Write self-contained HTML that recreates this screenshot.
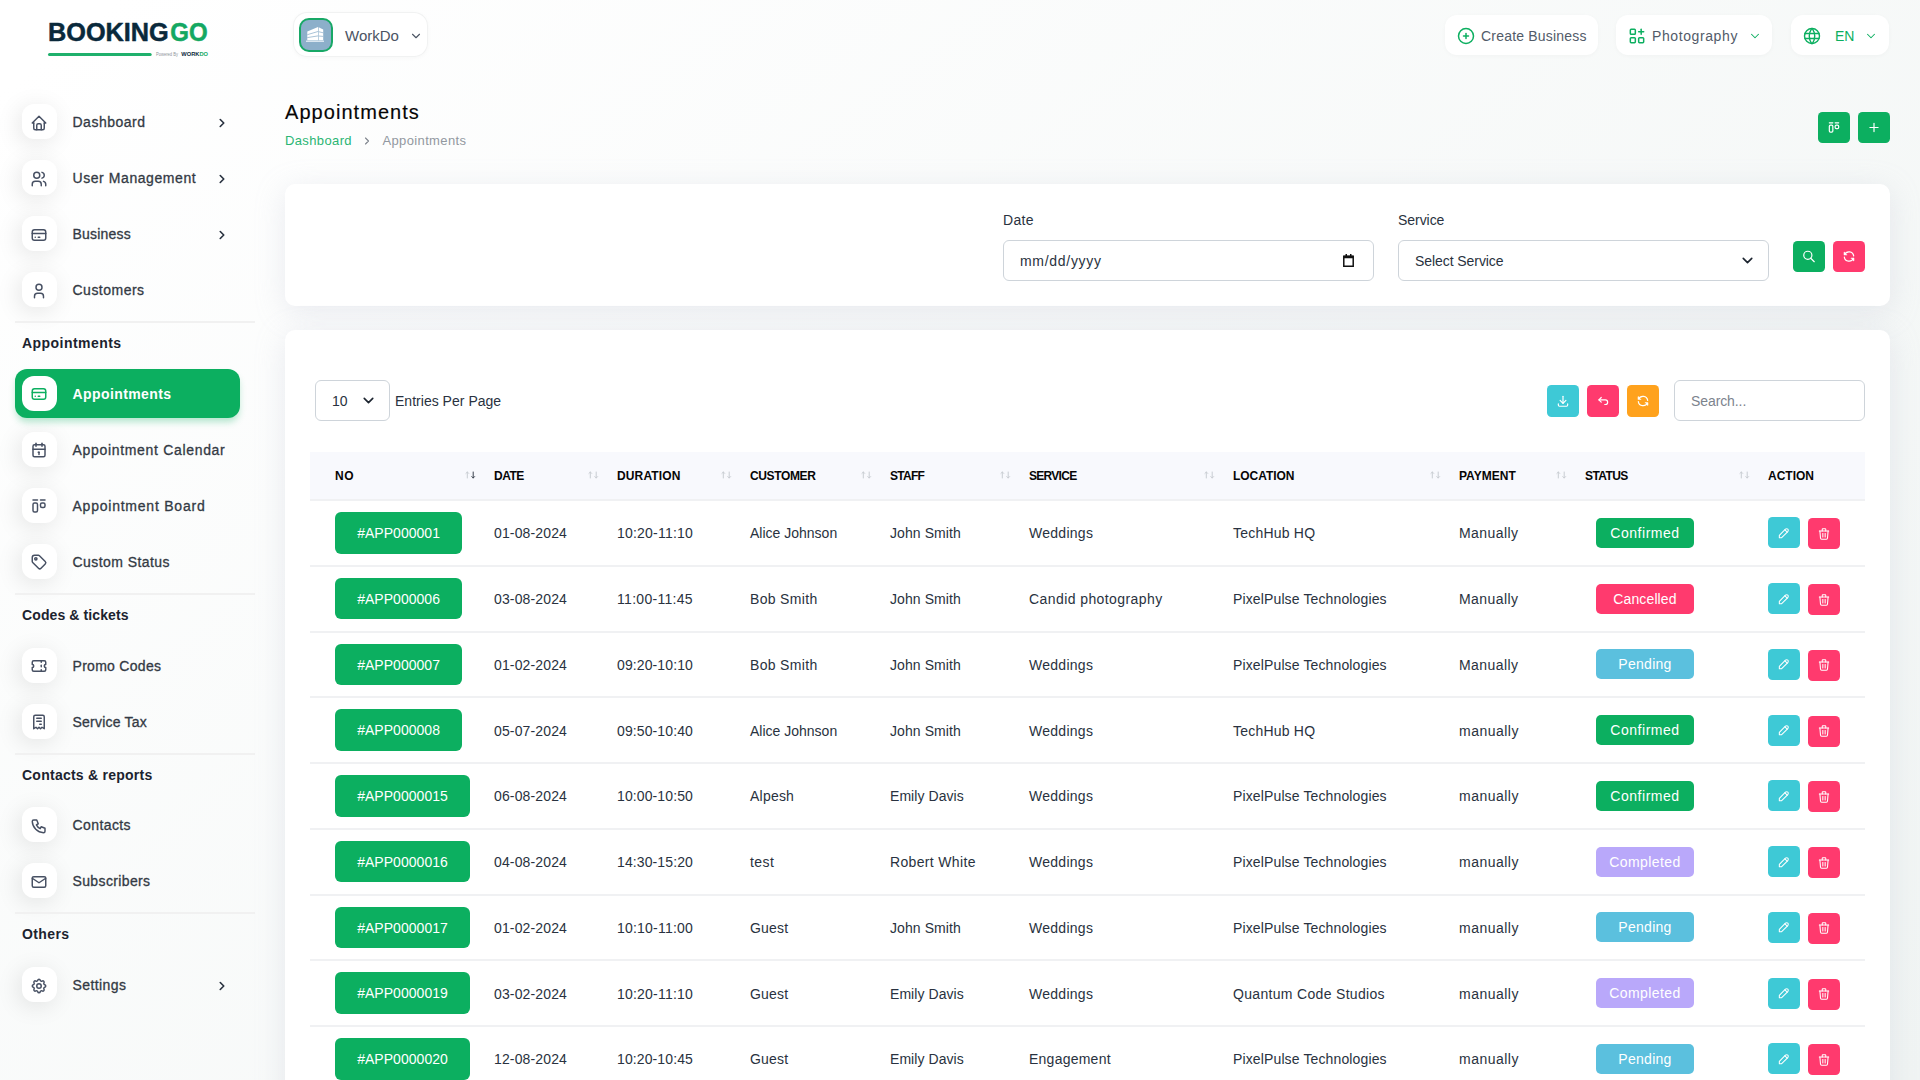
<!DOCTYPE html>
<html lang="en"><head><meta charset="utf-8"><title>Appointments</title>
<style>
*{box-sizing:border-box;margin:0;padding:0}
html,body{width:1920px;height:1080px;overflow:hidden}
body{font-family:"Liberation Sans",sans-serif;font-size:14px;color:#293240;
 background:linear-gradient(141.55deg,rgba(240,244,243,0) 3.46%,#f0f4f3 99.86%),#fff;position:relative}
a{text-decoration:none;color:inherit}
svg{display:block}
.ico{fill:none;stroke:currentColor;stroke-width:2;stroke-linecap:round;stroke-linejoin:round}
/* sidebar */
.sidebar{position:absolute;left:0;top:0;width:280px;height:1080px}
.logo{position:absolute;left:47px;top:18px;width:165px;height:44px}
.nav-item{position:absolute;left:15px;width:225px;height:49px;border-radius:12px;display:flex;align-items:center;color:#333a44;font-weight:400;font-size:14px;-webkit-text-stroke:.3px #333a44}
.nav-item .ib{position:absolute;left:7px;top:7px;width:35px;height:35px;border-radius:12px;background:#fff;box-shadow:-3px 4px 23px rgba(0,0,0,.1);display:flex;align-items:center;justify-content:center;color:#475063}
.nav-item .ib svg{width:18px;height:18px;stroke-width:1.95;position:relative;margin-left:-.6px}
.nav-item .lbl{position:absolute;left:57.500px;top:1px;line-height:49px;white-space:nowrap;letter-spacing:.62px}
.nav-item .chev{position:absolute;left:200px;top:19.200px;width:14px;height:14px;color:#293240;stroke-width:2.8}
.nav-item.active{background:#0caf60;color:#fff;font-weight:700;-webkit-text-stroke:0;box-shadow:0 5px 7px -1px rgba(12,175,96,.3)}
.nav-item.active .ib{color:#0caf60;box-shadow:none}
.nav-sep{position:absolute;left:15px;width:240px;height:2px;background:#f1f1f1}
.nav-cap{position:absolute;left:22px;font-weight:700;font-size:14px;color:#1c232f;line-height:20px;white-space:nowrap;letter-spacing:.4px}
/* header */
.pill{position:absolute;background:#fff;border-radius:12px;box-shadow:0 1px 4px rgba(0,0,0,.03);display:flex;align-items:center;white-space:nowrap;color:#525b69;font-size:14px}
.green{color:#0caf60}
/* page head */
.ptitle{position:absolute;left:285px;top:98px;font-size:20px;line-height:28px;font-weight:400;color:#060606;letter-spacing:1.05px;-webkit-text-stroke:.15px #060606}
.crumb{position:absolute;left:285px;top:132.300px;font-size:13px;line-height:18px;color:#9298a0;letter-spacing:.37px;display:flex;align-items:center;white-space:nowrap}
.crumb a{color:#2bb574}
.crumb svg{width:12px;height:12px;margin:0 9.500px 0 9px;stroke-width:2.2;color:#7d838c}
.sbtn{position:absolute;width:32px;height:31px;border-radius:4.500px;display:flex;align-items:center;justify-content:center;color:#fff}
.sbtn svg{width:14px;height:14px;stroke-width:2.05;position:relative;top:0}
.sbtn.up svg{top:-.7px}
.bg-g{background:#0caf60}.bg-p{background:#ff3a6e}.bg-c{background:#3ec9d6}.bg-o{background:#ffa21d}
.card{position:absolute;left:285px;width:1605px;background:#fff;border-radius:10px;box-shadow:0 6px 30px rgba(182,186,203,.27)}
.flabel{position:absolute;font-size:14px;line-height:20px;color:#293240}
.finput{position:absolute;height:41px;border:1px solid #ced4da;border-radius:6px;background:#fff;font-size:14px;line-height:41px;padding-left:16px;color:#293240;white-space:nowrap}
/* table */
table{position:absolute;left:310px;top:452px;width:1555px;border-collapse:separate;border-spacing:0;table-layout:fixed}
th{height:49px;background:#f8f9fd;text-align:left;font-size:12px;font-weight:700;color:#060606;text-transform:uppercase;padding:0 0 0 12px;position:relative;border-bottom:2px solid #f0f1f3;white-space:nowrap;letter-spacing:-.2px;padding-top:.5px}
td{padding:0 0 0 12px;border-bottom:2px solid #f0f1f3;white-space:nowrap;color:#293240;font-size:14px;vertical-align:middle}
th:first-child,td:first-child{padding-left:25px}
tr.r{height:65.75px}
.sort{position:absolute;right:6px;top:18px;width:11px;height:10px}
.app{display:inline-block;height:41.600px;line-height:43.600px;vertical-align:middle;overflow:hidden;padding:0 22.150px;border-radius:6px;background:#0caf60;color:#fff;font-size:14px}
.badge{display:block;margin-left:11px;width:98px;height:30px;line-height:30px;text-align:center;border-radius:5px;color:#fff;font-size:14px}
.b-conf{background:#0caf60}.b-canc{background:#ff3a6e}.b-pend{background:#5bc0de}.b-comp{background:#b9a8fa}
.act{display:flex;gap:8px}
.act span{width:32px;height:31px;border-radius:4.500px;display:flex;align-items:center;justify-content:center;color:#fff}
.act svg{width:14px;height:14px;stroke-width:1.8}
td.t{padding-top:1.500px}
tbody tr:first-child td.t,tbody tr:nth-child(5) td.t,tbody tr:nth-child(9) td.t{padding-top:0}
.act span+span{position:relative;top:1px}
.act span+span svg{position:relative;top:-.1px}
.sbtn.t32{height:32px}
.nav-item.active .lbl{top:1px;letter-spacing:.4px}
</style></head>
<body>
<nav class="sidebar">
<div class="logo"><svg width="165" height="44" viewBox="0 0 165 44">
<text x="1" y="22.900" font-family="Liberation Sans, sans-serif" font-weight="700" font-size="26.200" textLength="120.700" lengthAdjust="spacingAndGlyphs" stroke-width=".5" stroke-linejoin="round" fill="#0a293b" stroke="#0a293b">BOOKING</text>
<text x="123.300" y="22.900" font-family="Liberation Sans, sans-serif" font-weight="700" font-size="26.200" textLength="37.400" lengthAdjust="spacingAndGlyphs" stroke-width=".5" stroke-linejoin="round" fill="#14a862" stroke="#14a862">GO</text>
<rect x="1" y="35" width="103.700" height="3" rx="1.500" fill="#1fb06c"/>
<text x="109" y="37.600" font-family="Liberation Sans, sans-serif" font-size="4.500" fill="#8d949b" textLength="22" lengthAdjust="spacingAndGlyphs">Powered By</text>
<text x="134.300" y="38" font-family="Liberation Sans, sans-serif" font-weight="700" font-size="6" textLength="26.700" lengthAdjust="spacingAndGlyphs"><tspan fill="#0a293b">WORK</tspan><tspan fill="#14a862">DO</tspan></text>
</svg></div>
<a class="nav-item" style="top:97px"><span class="ib"><svg class="ico" viewBox="0 0 24 24" style="top:1.3px"><path d="M5 12H3l9-9 9 9h-2"/><path d="M5 12v7a2 2 0 0 0 2 2h10a2 2 0 0 0 2-2v-7"/><path d="M9 21v-6a2 2 0 0 1 2-2h2a2 2 0 0 1 2 2v6"/></svg></span><span class="lbl" style="letter-spacing:0.51px">Dashboard</span><svg class="ico chev" viewBox="0 0 24 24" ><path d="M9 6l6 6-6 6"/></svg></a>
<a class="nav-item" style="top:153px"><span class="ib"><svg class="ico" viewBox="0 0 24 24" style="top:1.5px"><circle cx="9" cy="7" r="4"/><path d="M3 21v-2a4 4 0 0 1 4-4h4a4 4 0 0 1 4 4v2"/><path d="M16 3.130a4 4 0 0 1 0 7.750"/><path d="M21 21v-2a4 4 0 0 0-3-3.850"/></svg></span><span class="lbl" style="letter-spacing:0.57px">User Management</span><svg class="ico chev" viewBox="0 0 24 24" ><path d="M9 6l6 6-6 6"/></svg></a>
<a class="nav-item" style="top:209px"><span class="ib"><svg class="ico" viewBox="0 0 24 24" style="top:1.6px"><rect x="3" y="5" width="18" height="14" rx="3"/><path d="M3 10h18"/><path d="M7 15h.01"/><path d="M11 15h2"/></svg></span><span class="lbl" style="letter-spacing:0.21px">Business</span><svg class="ico chev" viewBox="0 0 24 24" ><path d="M9 6l6 6-6 6"/></svg></a>
<a class="nav-item" style="top:265px"><span class="ib"><svg class="ico" viewBox="0 0 24 24" style="top:1.6px"><circle cx="12" cy="7" r="4"/><path d="M6 21v-2a4 4 0 0 1 4-4h4a4 4 0 0 1 4 4v2"/></svg></span><span class="lbl" style="letter-spacing:0.49px">Customers</span></a>
<div class="nav-sep" style="top:321px"></div>
<div class="nav-cap" style="top:333px;letter-spacing:0.45px">Appointments</div>
<a class="nav-item active" style="top:369px"><span class="ib"><svg class="ico" viewBox="0 0 24 24" style="top:0.4px"><rect x="3" y="5" width="18" height="14" rx="3"/><path d="M3 10h18"/><path d="M7 15h.01"/><path d="M11 15h2"/></svg></span><span class="lbl" style="letter-spacing:0.41px">Appointments</span></a>
<a class="nav-item" style="top:425px"><span class="ib"><svg class="ico" viewBox="0 0 24 24" style="top:0px"><rect x="4" y="5" width="16" height="16" rx="2"/><path d="M16 3v4"/><path d="M8 3v4"/><path d="M4 11h16"/><path d="M11 15h1"/><path d="M12 15v3"/></svg></span><span class="lbl" style="letter-spacing:0.68px">Appointment Calendar</span></a>
<a class="nav-item" style="top:481px"><span class="ib"><svg class="ico" viewBox="0 0 24 24" style="top:0px"><path d="M4 4h6"/><path d="M14 4h6"/><rect x="4" y="8" width="6" height="12" rx="2"/><rect x="14" y="8" width="6" height="6" rx="2"/></svg></span><span class="lbl" style="letter-spacing:0.77px">Appointment Board</span></a>
<a class="nav-item" style="top:537px"><span class="ib"><svg class="ico" viewBox="0 0 24 24" style="top:0px"><circle cx="7.800" cy="7.800" r="1.500"/><path d="M3 6v5.172a2 2 0 0 0 .586 1.414l7.710 7.710a2.410 2.410 0 0 0 3.408 0l5.592-5.592a2.410 2.410 0 0 0 0-3.408l-7.710-7.710A2 2 0 0 0 11.172 3H6a3 3 0 0 0-3 3z"/></svg></span><span class="lbl" style="letter-spacing:0.44px">Custom Status</span></a>
<div class="nav-sep" style="top:593px"></div>
<div class="nav-cap" style="top:605px;letter-spacing:0.11px">Codes &amp; tickets</div>
<a class="nav-item" style="top:641px"><span class="ib"><svg class="ico" viewBox="0 0 24 24" style="top:0.3px"><path d="M15 5v2"/><path d="M15 11v2"/><path d="M15 17v2"/><path d="M5 5h14a2 2 0 0 1 2 2v3a2 2 0 0 0 0 4v3a2 2 0 0 1-2 2H5a2 2 0 0 1-2-2v-3a2 2 0 0 0 0-4V7a2 2 0 0 1 2-2"/></svg></span><span class="lbl" style="letter-spacing:0.29px">Promo Codes</span></a>
<a class="nav-item" style="top:697px"><span class="ib"><svg class="ico" viewBox="0 0 24 24" style="top:0.4px"><path d="M5 21V5a2 2 0 0 1 2-2h10a2 2 0 0 1 2 2v16l-3-2-2 2-2-2-2 2-2-2-3 2"/><path d="M9 7h6"/><path d="M9 11h6"/><path d="M13 15h2"/></svg></span><span class="lbl" style="letter-spacing:0.22px">Service Tax</span></a>
<div class="nav-sep" style="top:753px"></div>
<div class="nav-cap" style="top:765px;letter-spacing:0.25px">Contacts &amp; reports</div>
<a class="nav-item" style="top:800px"><span class="ib"><svg class="ico" viewBox="0 0 24 24" style="top:1.3px"><path d="M5 4h4l2 5-2.5 1.5a11 11 0 0 0 5 5l1.5-2.5 5 2v4a2 2 0 0 1-2 2A16 16 0 0 1 3 6a2 2 0 0 1 2-2"/></svg></span><span class="lbl" style="letter-spacing:0.41px">Contacts</span></a>
<a class="nav-item" style="top:856px"><span class="ib"><svg class="ico" viewBox="0 0 24 24" style="top:1.1px"><rect x="3" y="5" width="18" height="14" rx="2"/><path d="M3 7l9 6 9-6"/></svg></span><span class="lbl" style="letter-spacing:0.37px">Subscribers</span></a>
<div class="nav-sep" style="top:912px"></div>
<div class="nav-cap" style="top:924px;letter-spacing:0.4px">Others</div>
<a class="nav-item" style="top:960px"><span class="ib"><svg class="ico" viewBox="0 0 24 24" style="top:1.2px"><path d="M10.325 4.317c.426-1.756 2.924-1.756 3.35 0a1.724 1.724 0 0 0 2.573 1.066c1.543-.94 3.31.826 2.37 2.37a1.724 1.724 0 0 0 1.065 2.572c1.756.426 1.756 2.924 0 3.35a1.724 1.724 0 0 0-1.066 2.573c.94 1.543-.826 3.31-2.37 2.37a1.724 1.724 0 0 0-2.572 1.065c-.426 1.756-2.924 1.756-3.35 0a1.724 1.724 0 0 0-2.573-1.066c-1.543.94-3.31-.826-2.37-2.37a1.724 1.724 0 0 0-1.065-2.572c-1.756-.426-1.756-2.924 0-3.35a1.724 1.724 0 0 0 1.066-2.573c-.94-1.543.826-3.31 2.37-2.37 1 .608 2.296.07 2.572-1.065z"/><circle cx="12" cy="12" r="3"/></svg></span><span class="lbl" style="letter-spacing:0.4px">Settings</span><svg class="ico chev" viewBox="0 0 24 24" ><path d="M9 6l6 6-6 6"/></svg></a>
</nav>
<header>
<div class="pill" style="left:293px;top:12px;width:135px;height:45px;border-radius:14px;box-shadow:inset 0 0 0 1px #f1f2f2,0 1px 4px rgba(0,0,0,.03)">
<span style="position:absolute;left:6px;top:6px;width:34px;height:34px;border-radius:10px;background:#8cafca;border:2px solid #18a866">
<svg width="34" height="34" viewBox="0 0 34 34" style="position:absolute;left:-2px;top:-2px"><rect x="7" y="22.600" width="18" height="1.300" fill="#e3edf4"/><path d="M8.300 22.300V13.600L19 8.900V22.300z" fill="#fff"/><path d="M19.600 9.200l4.600 2.300v10.800h-4.600z" fill="#fff"/><path d="M8.300 16.700L19 13.500M8.300 19.600L19 17.900M19.600 13.700l4.600 1.100M19.600 18l4.600.4" stroke="#8cafca" stroke-width=".75" fill="none"/></svg></span>
<span style="position:absolute;left:52px;top:1px;line-height:46px;font-size:15px;letter-spacing:0;color:#4b5463">WorkDo</span>
<svg class="ico" viewBox="0 0 24 24" style="position:absolute;left:115.500px;top:16.500px;width:14px;height:14px;stroke-width:1.9;color:#4b5463"><path d="M6 9l6 6 6-6"/></svg>
</div>
<div class="pill" style="left:1445px;top:15px;width:153px;height:40px">
<svg class="ico green" viewBox="0 0 24 24" style="position:absolute;left:11px;top:10.500px;width:20px;height:20px;stroke-width:1.8"><circle cx="12" cy="12" r="9"/><path d="M9 12h6"/><path d="M12 9v6"/></svg>
<span style="position:absolute;left:36px;top:1px;line-height:41px;letter-spacing:.2px">Create Business</span></div>
<div class="pill" style="left:1616px;top:15px;width:156px;height:40px">
<svg class="ico green" viewBox="0 0 24 24" style="position:absolute;left:11px;top:10.500px;width:20px;height:20px;stroke-width:1.8"><rect x="4" y="4" width="6" height="6" rx="1"/><rect x="4" y="14" width="6" height="6" rx="1"/><rect x="14" y="14" width="6" height="6" rx="1"/><path d="M14 7h6"/><path d="M17 4v6"/></svg>
<span style="position:absolute;left:36px;top:1px;line-height:41px;letter-spacing:.6px">Photography</span>
<svg class="ico green" viewBox="0 0 24 24" style="position:absolute;left:132px;top:13.500px;width:14px;height:14px;stroke-width:1.8"><path d="M6 9l6 6 6-6"/></svg></div>
<div class="pill" style="left:1791px;top:15px;width:98px;height:40px">
<svg class="ico green" viewBox="0 0 24 24" style="position:absolute;left:11px;top:10.500px;width:20px;height:20px;stroke-width:1.7"><circle cx="12" cy="12" r="9"/><path d="M3.6 9h16.8"/><path d="M3.6 15h16.8"/><path d="M11.5 3a17 17 0 0 0 0 18"/><path d="M12.5 3a17 17 0 0 1 0 18"/></svg>
<span class="green" style="position:absolute;left:44px;top:1px;line-height:41px;letter-spacing:-.1px">EN</span>
<svg class="ico green" viewBox="0 0 24 24" style="position:absolute;left:73px;top:13.500px;width:14px;height:14px;stroke-width:1.8"><path d="M6 9l6 6 6-6"/></svg></div>
</header>
<main>
<h1 class="ptitle">Appointments</h1>
<div class="crumb"><a>Dashboard</a><svg class="ico" viewBox="0 0 24 24" ><path d="M9 6l6 6-6 6"/></svg><span>Appointments</span></div>
<a class="sbtn bg-g" style="left:1818px;top:112px"><svg class="ico" viewBox="0 .86 24 24" ><path d="M4 4h6"/><path d="M14 4h6"/><rect x="4" y="8" width="6" height="12" rx="2"/><rect x="14" y="8" width="6" height="6" rx="2"/></svg></a><a class="sbtn bg-g" style="left:1858px;top:112px"><svg class="ico" viewBox="0 .86 24 24" ><path d="M12 5v14"/><path d="M5 12h14"/></svg></a>
<section class="card" style="top:184px;height:122px"></section>
<label class="flabel" style="left:1003px;top:210px;letter-spacing:0.3px">Date</label>
<div class="finput" style="left:1003px;top:240px;width:371px"><span style="letter-spacing:0.7px">mm/dd/yyyy</span><svg style="position:absolute;right:19.500px;top:12.500px" width="11" height="13" viewBox="0 0 14 16.500"><path d="M1 2.700h12v12.800H1z" fill="none" stroke="#111" stroke-width="1.900"/><path d="M1 2.200h12v3.300H1zM3.200 0h1.900v3H3.200zM8.900 0h1.900v3H8.900z" fill="#111"/></svg></div>
<label class="flabel" style="left:1398px;top:210px;letter-spacing:-0.05px">Service</label>
<div class="finput" style="left:1398px;top:240px;width:371px"><span style="letter-spacing:-0.07px">Select Service</span><svg class="ico" viewBox="0 0 24 24" style='position:absolute;right:12.500px;top:10.500px;width:17px;height:17px;stroke-width:2.3;color:#1d2530'><path d="M6 9l6 6 6-6"/></svg></div>
<a class="sbtn bg-g" style="left:1793px;top:241px"><svg class="ico" viewBox="0 .9 24 24" ><circle cx="10" cy="10" r="7"/><path d="M21 21l-6-6"/></svg></a><a class="sbtn bg-p" style="left:1833px;top:241px"><svg class="ico" viewBox="0 .9 24 24" ><path d="M20 11A8.1 8.1 0 0 0 4.5 9M4 5v4h4"/><path d="M4 13a8.1 8.1 0 0 0 15.500 2m.5 4v-4h-4"/></svg></a>
<section class="card" style="top:330px;height:800px"></section>
<div class="finput" style="left:315px;top:380px;width:75px">10<svg class="ico" viewBox="0 0 24 24" style='position:absolute;right:12.500px;top:10.500px;width:17px;height:17px;stroke-width:2.3;color:#1d2530'><path d="M6 9l6 6 6-6"/></svg></div>
<span class="flabel" style="left:395px;top:391px;letter-spacing:0.02px">Entries Per Page</span>
<a class="sbtn t32 bg-c" style="left:1547px;top:385px"><svg class="ico" viewBox="0 0 24 24" ><path d="M4 17v2a2 2 0 0 0 2 2h12a2 2 0 0 0 2-2v-2"/><path d="M7 11l5 5 5-5"/><path d="M12 4v12"/></svg></a><a class="sbtn t32 bg-p" style="left:1587px;top:385px"><svg class="ico" viewBox="0 0 24 24" ><path d="M9 14l-4-4 4-4"/><path d="M5 10h11a4 4 0 1 1 0 8h-1"/></svg></a><a class="sbtn t32 bg-o" style="left:1627px;top:385px"><svg class="ico" viewBox="0 0 24 24" ><path d="M20 11A8.1 8.1 0 0 0 4.5 9M4 5v4h4"/><path d="M4 13a8.1 8.1 0 0 0 15.500 2m.5 4v-4h-4"/></svg></a>
<div class="finput" style="left:1674px;top:380px;width:191px;color:#7c838d;letter-spacing:-0.09px">Search...</div>
<table>
<colgroup><col style="width:172px"><col style="width:123px"><col style="width:133px"><col style="width:140px"><col style="width:139px"><col style="width:204px"><col style="width:226px"><col style="width:126px"><col style="width:183px"><col style="width:109px"></colgroup>
<thead><tr><th style="letter-spacing:0.65px">No<svg class="sort" viewBox="0 0 11 10" fill="none" stroke-width="1" stroke-linecap="round" stroke-linejoin="round"><path d="M2.300 8V2M.9 3.400l1.400-1.400 1.400 1.400" stroke="#c9cdd2"/><path d="M8.200 2v6M6.800 6.600L8.200 8l1.400-1.400" stroke="#3a424e"/></svg></th><th style="letter-spacing:-0.51px">Date<svg class="sort" viewBox="0 0 11 10" fill="none" stroke-width="1" stroke-linecap="round" stroke-linejoin="round"><path d="M2.300 8V2M.9 3.400l1.400-1.400 1.400 1.400" stroke="#c9cdd2"/><path d="M8.200 2v6M6.800 6.600L8.200 8l1.400-1.400" stroke="#c9cdd2"/></svg></th><th style="letter-spacing:0.14px">Duration<svg class="sort" viewBox="0 0 11 10" fill="none" stroke-width="1" stroke-linecap="round" stroke-linejoin="round"><path d="M2.300 8V2M.9 3.400l1.400-1.400 1.400 1.400" stroke="#c9cdd2"/><path d="M8.200 2v6M6.800 6.600L8.200 8l1.400-1.400" stroke="#c9cdd2"/></svg></th><th style="letter-spacing:-0.36px">Customer<svg class="sort" viewBox="0 0 11 10" fill="none" stroke-width="1" stroke-linecap="round" stroke-linejoin="round"><path d="M2.300 8V2M.9 3.400l1.400-1.400 1.400 1.400" stroke="#c9cdd2"/><path d="M8.200 2v6M6.800 6.600L8.200 8l1.400-1.400" stroke="#c9cdd2"/></svg></th><th style="letter-spacing:-0.72px">Staff<svg class="sort" viewBox="0 0 11 10" fill="none" stroke-width="1" stroke-linecap="round" stroke-linejoin="round"><path d="M2.300 8V2M.9 3.400l1.400-1.400 1.400 1.400" stroke="#c9cdd2"/><path d="M8.200 2v6M6.800 6.600L8.200 8l1.400-1.400" stroke="#c9cdd2"/></svg></th><th style="letter-spacing:-0.72px">Service<svg class="sort" viewBox="0 0 11 10" fill="none" stroke-width="1" stroke-linecap="round" stroke-linejoin="round"><path d="M2.300 8V2M.9 3.400l1.400-1.400 1.400 1.400" stroke="#c9cdd2"/><path d="M8.200 2v6M6.800 6.600L8.200 8l1.400-1.400" stroke="#c9cdd2"/></svg></th><th style="letter-spacing:-0.05px">Location<svg class="sort" viewBox="0 0 11 10" fill="none" stroke-width="1" stroke-linecap="round" stroke-linejoin="round"><path d="M2.300 8V2M.9 3.400l1.400-1.400 1.400 1.400" stroke="#c9cdd2"/><path d="M8.200 2v6M6.800 6.600L8.200 8l1.400-1.400" stroke="#c9cdd2"/></svg></th><th style="letter-spacing:0.01px">Payment<svg class="sort" viewBox="0 0 11 10" fill="none" stroke-width="1" stroke-linecap="round" stroke-linejoin="round"><path d="M2.300 8V2M.9 3.400l1.400-1.400 1.400 1.400" stroke="#c9cdd2"/><path d="M8.200 2v6M6.800 6.600L8.200 8l1.400-1.400" stroke="#c9cdd2"/></svg></th><th style="letter-spacing:-0.57px">Status<svg class="sort" viewBox="0 0 11 10" fill="none" stroke-width="1" stroke-linecap="round" stroke-linejoin="round"><path d="M2.300 8V2M.9 3.400l1.400-1.400 1.400 1.400" stroke="#c9cdd2"/><path d="M8.200 2v6M6.800 6.600L8.200 8l1.400-1.400" stroke="#c9cdd2"/></svg></th><th style="letter-spacing:-0.01px">Action</th></tr></thead>
<tbody>
<tr class="r"><td><a class="app" style="letter-spacing:0.03px">#APP000001</a></td><td class="t" style="letter-spacing:0.14px">01-08-2024</td><td class="t" style="letter-spacing:0.21px">10:20-11:10</td><td class="t" style="letter-spacing:0.0px">Alice Johnson</td><td class="t" style="letter-spacing:0.08px">John Smith</td><td class="t" style="letter-spacing:0.27px">Weddings</td><td class="t" style="letter-spacing:0.21px">TechHub HQ</td><td class="t" style="letter-spacing:0.44px">Manually</td><td><span class="badge b-conf" style="letter-spacing:0.53px">Confirmed</span></td><td><div class="act"><span class="bg-c"><svg class="ico" viewBox="0 0 24 24" ><path d="M4 20h4L18.500 9.500a2.828 2.828 0 1 0-4-4L4 16v4"/><path d="M13.500 6.500l4 4"/></svg></span><span class="bg-p"><svg class="ico" viewBox="0 0 24 24" ><path d="M4 7h16"/><path d="M10 11v6"/><path d="M14 11v6"/><path d="M5 7l1 12a2 2 0 0 0 2 2h8a2 2 0 0 0 2-2l1-12"/><path d="M9 7V4a1 1 0 0 1 1-1h4a1 1 0 0 1 1 1v3"/></svg></span></div></td></tr>
<tr class="r"><td><a class="app" style="letter-spacing:0.03px">#APP000006</a></td><td class="t" style="letter-spacing:0.14px">03-08-2024</td><td class="t" style="letter-spacing:0.3px">11:00-11:45</td><td class="t" style="letter-spacing:0.33px">Bob Smith</td><td class="t" style="letter-spacing:0.08px">John Smith</td><td class="t" style="letter-spacing:0.42px">Candid photography</td><td class="t" style="letter-spacing:0.13px">PixelPulse Technologies</td><td class="t" style="letter-spacing:0.44px">Manually</td><td><span class="badge b-canc" style="letter-spacing:0.11px">Cancelled</span></td><td><div class="act"><span class="bg-c"><svg class="ico" viewBox="0 0 24 24" ><path d="M4 20h4L18.500 9.500a2.828 2.828 0 1 0-4-4L4 16v4"/><path d="M13.500 6.500l4 4"/></svg></span><span class="bg-p"><svg class="ico" viewBox="0 0 24 24" ><path d="M4 7h16"/><path d="M10 11v6"/><path d="M14 11v6"/><path d="M5 7l1 12a2 2 0 0 0 2 2h8a2 2 0 0 0 2-2l1-12"/><path d="M9 7V4a1 1 0 0 1 1-1h4a1 1 0 0 1 1 1v3"/></svg></span></div></td></tr>
<tr class="r"><td><a class="app" style="letter-spacing:0.03px">#APP000007</a></td><td class="t" style="letter-spacing:0.14px">01-02-2024</td><td class="t" style="letter-spacing:0.11px">09:20-10:10</td><td class="t" style="letter-spacing:0.33px">Bob Smith</td><td class="t" style="letter-spacing:0.08px">John Smith</td><td class="t" style="letter-spacing:0.27px">Weddings</td><td class="t" style="letter-spacing:0.13px">PixelPulse Technologies</td><td class="t" style="letter-spacing:0.44px">Manually</td><td><span class="badge b-pend" style="letter-spacing:0.27px">Pending</span></td><td><div class="act"><span class="bg-c"><svg class="ico" viewBox="0 0 24 24" ><path d="M4 20h4L18.500 9.500a2.828 2.828 0 1 0-4-4L4 16v4"/><path d="M13.500 6.500l4 4"/></svg></span><span class="bg-p"><svg class="ico" viewBox="0 0 24 24" ><path d="M4 7h16"/><path d="M10 11v6"/><path d="M14 11v6"/><path d="M5 7l1 12a2 2 0 0 0 2 2h8a2 2 0 0 0 2-2l1-12"/><path d="M9 7V4a1 1 0 0 1 1-1h4a1 1 0 0 1 1 1v3"/></svg></span></div></td></tr>
<tr class="r"><td><a class="app" style="letter-spacing:0.03px">#APP000008</a></td><td class="t" style="letter-spacing:0.14px">05-07-2024</td><td class="t" style="letter-spacing:0.11px">09:50-10:40</td><td class="t" style="letter-spacing:0.0px">Alice Johnson</td><td class="t" style="letter-spacing:0.08px">John Smith</td><td class="t" style="letter-spacing:0.27px">Weddings</td><td class="t" style="letter-spacing:0.21px">TechHub HQ</td><td class="t" style="letter-spacing:0.49px">manually</td><td><span class="badge b-conf" style="letter-spacing:0.53px">Confirmed</span></td><td><div class="act"><span class="bg-c"><svg class="ico" viewBox="0 0 24 24" ><path d="M4 20h4L18.500 9.500a2.828 2.828 0 1 0-4-4L4 16v4"/><path d="M13.500 6.500l4 4"/></svg></span><span class="bg-p"><svg class="ico" viewBox="0 0 24 24" ><path d="M4 7h16"/><path d="M10 11v6"/><path d="M14 11v6"/><path d="M5 7l1 12a2 2 0 0 0 2 2h8a2 2 0 0 0 2-2l1-12"/><path d="M9 7V4a1 1 0 0 1 1-1h4a1 1 0 0 1 1 1v3"/></svg></span></div></td></tr>
<tr class="r"><td><a class="app" style="letter-spacing:0.04px">#APP0000015</a></td><td class="t" style="letter-spacing:0.14px">06-08-2024</td><td class="t" style="letter-spacing:0.11px">10:00-10:50</td><td class="t" style="letter-spacing:0.22px">Alpesh</td><td class="t" style="letter-spacing:0.06px">Emily Davis</td><td class="t" style="letter-spacing:0.27px">Weddings</td><td class="t" style="letter-spacing:0.13px">PixelPulse Technologies</td><td class="t" style="letter-spacing:0.49px">manually</td><td><span class="badge b-conf" style="letter-spacing:0.53px">Confirmed</span></td><td><div class="act"><span class="bg-c"><svg class="ico" viewBox="0 0 24 24" ><path d="M4 20h4L18.500 9.500a2.828 2.828 0 1 0-4-4L4 16v4"/><path d="M13.500 6.500l4 4"/></svg></span><span class="bg-p"><svg class="ico" viewBox="0 0 24 24" ><path d="M4 7h16"/><path d="M10 11v6"/><path d="M14 11v6"/><path d="M5 7l1 12a2 2 0 0 0 2 2h8a2 2 0 0 0 2-2l1-12"/><path d="M9 7V4a1 1 0 0 1 1-1h4a1 1 0 0 1 1 1v3"/></svg></span></div></td></tr>
<tr class="r"><td><a class="app" style="letter-spacing:0.04px">#APP0000016</a></td><td class="t" style="letter-spacing:0.14px">04-08-2024</td><td class="t" style="letter-spacing:0.11px">14:30-15:20</td><td class="t" style="letter-spacing:0.46px">test</td><td class="t" style="letter-spacing:0.34px">Robert White</td><td class="t" style="letter-spacing:0.27px">Weddings</td><td class="t" style="letter-spacing:0.13px">PixelPulse Technologies</td><td class="t" style="letter-spacing:0.49px">manually</td><td><span class="badge b-comp" style="letter-spacing:0.44px">Completed</span></td><td><div class="act"><span class="bg-c"><svg class="ico" viewBox="0 0 24 24" ><path d="M4 20h4L18.500 9.500a2.828 2.828 0 1 0-4-4L4 16v4"/><path d="M13.500 6.500l4 4"/></svg></span><span class="bg-p"><svg class="ico" viewBox="0 0 24 24" ><path d="M4 7h16"/><path d="M10 11v6"/><path d="M14 11v6"/><path d="M5 7l1 12a2 2 0 0 0 2 2h8a2 2 0 0 0 2-2l1-12"/><path d="M9 7V4a1 1 0 0 1 1-1h4a1 1 0 0 1 1 1v3"/></svg></span></div></td></tr>
<tr class="r"><td><a class="app" style="letter-spacing:0.04px">#APP0000017</a></td><td class="t" style="letter-spacing:0.14px">01-02-2024</td><td class="t" style="letter-spacing:0.21px">10:10-11:00</td><td class="t" style="letter-spacing:0.18px">Guest</td><td class="t" style="letter-spacing:0.08px">John Smith</td><td class="t" style="letter-spacing:0.27px">Weddings</td><td class="t" style="letter-spacing:0.13px">PixelPulse Technologies</td><td class="t" style="letter-spacing:0.49px">manually</td><td><span class="badge b-pend" style="letter-spacing:0.27px">Pending</span></td><td><div class="act"><span class="bg-c"><svg class="ico" viewBox="0 0 24 24" ><path d="M4 20h4L18.500 9.500a2.828 2.828 0 1 0-4-4L4 16v4"/><path d="M13.500 6.500l4 4"/></svg></span><span class="bg-p"><svg class="ico" viewBox="0 0 24 24" ><path d="M4 7h16"/><path d="M10 11v6"/><path d="M14 11v6"/><path d="M5 7l1 12a2 2 0 0 0 2 2h8a2 2 0 0 0 2-2l1-12"/><path d="M9 7V4a1 1 0 0 1 1-1h4a1 1 0 0 1 1 1v3"/></svg></span></div></td></tr>
<tr class="r"><td><a class="app" style="letter-spacing:0.04px">#APP0000019</a></td><td class="t" style="letter-spacing:0.14px">03-02-2024</td><td class="t" style="letter-spacing:0.21px">10:20-11:10</td><td class="t" style="letter-spacing:0.18px">Guest</td><td class="t" style="letter-spacing:0.06px">Emily Davis</td><td class="t" style="letter-spacing:0.27px">Weddings</td><td class="t" style="letter-spacing:0.32px">Quantum Code Studios</td><td class="t" style="letter-spacing:0.49px">manually</td><td><span class="badge b-comp" style="letter-spacing:0.44px">Completed</span></td><td><div class="act"><span class="bg-c"><svg class="ico" viewBox="0 0 24 24" ><path d="M4 20h4L18.500 9.500a2.828 2.828 0 1 0-4-4L4 16v4"/><path d="M13.500 6.500l4 4"/></svg></span><span class="bg-p"><svg class="ico" viewBox="0 0 24 24" ><path d="M4 7h16"/><path d="M10 11v6"/><path d="M14 11v6"/><path d="M5 7l1 12a2 2 0 0 0 2 2h8a2 2 0 0 0 2-2l1-12"/><path d="M9 7V4a1 1 0 0 1 1-1h4a1 1 0 0 1 1 1v3"/></svg></span></div></td></tr>
<tr class="r"><td><a class="app" style="letter-spacing:0.04px">#APP0000020</a></td><td class="t" style="letter-spacing:0.14px">12-08-2024</td><td class="t" style="letter-spacing:0.11px">10:20-10:45</td><td class="t" style="letter-spacing:0.18px">Guest</td><td class="t" style="letter-spacing:0.06px">Emily Davis</td><td class="t" style="letter-spacing:0.24px">Engagement</td><td class="t" style="letter-spacing:0.13px">PixelPulse Technologies</td><td class="t" style="letter-spacing:0.49px">manually</td><td><span class="badge b-pend" style="letter-spacing:0.27px">Pending</span></td><td><div class="act"><span class="bg-c"><svg class="ico" viewBox="0 0 24 24" ><path d="M4 20h4L18.500 9.500a2.828 2.828 0 1 0-4-4L4 16v4"/><path d="M13.500 6.500l4 4"/></svg></span><span class="bg-p"><svg class="ico" viewBox="0 0 24 24" ><path d="M4 7h16"/><path d="M10 11v6"/><path d="M14 11v6"/><path d="M5 7l1 12a2 2 0 0 0 2 2h8a2 2 0 0 0 2-2l1-12"/><path d="M9 7V4a1 1 0 0 1 1-1h4a1 1 0 0 1 1 1v3"/></svg></span></div></td></tr>
</tbody></table>
</main>
</body></html>
